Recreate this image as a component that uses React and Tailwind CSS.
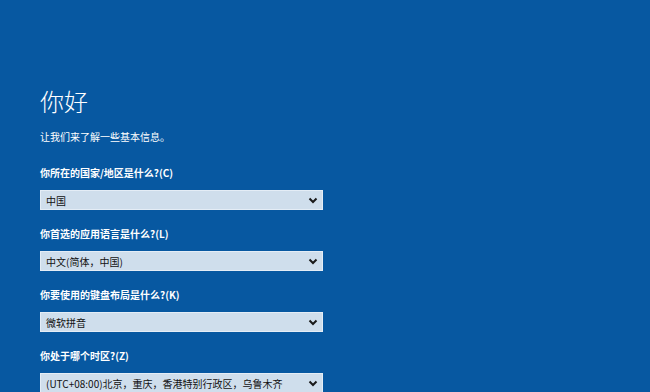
const fields = [
    { label: '你所在的国家/地区是什么?(C)', value: '中国' },
    { label: '你首选的应用语言是什么?(L)', value: '中文(简体，中国)' },
    { label: '你要使用的键盘布局是什么?(K)', value: '微软拼音' },
    { label: '你处于哪个时区?(Z)', value: '(UTC+08:00)北京，重庆，香港特别行政区，乌鲁木齐' },
];

const Chevron = () => (
    <svg width="10" height="7" viewBox="0 0 10 7" className="shrink-0">
        <path d="M1.5 1.5 L5 5 L8.5 1.5" fill="none" stroke="#1a1a1a" strokeWidth="2" />
    </svg>
);

export default function App() {
    return (
        <div
            className="w-[650px] h-[392px] overflow-hidden bg-[#0758a1] text-white pl-[40px] pt-[86px]"
            style={{ fontFamily: '"Microsoft YaHei", "Noto Sans CJK SC", "Liberation Sans", sans-serif' }}
        >
            <h1 className="text-[24px] leading-[30px] font-light">你好</h1>
            <p className="mt-[13px] text-[10px] leading-[16px]">让我们来了解一些基本信息。</p>

            <div className="mt-[20px] flex flex-col gap-[16px]">
                {fields.map((f) => (
                    <div key={f.label} className="flex flex-col gap-[9px]">
                        <div className="text-[10px] leading-[16px] font-bold">{f.label}</div>
                        <div className="w-[283px] h-[20px] bg-[#cfdeec] border border-[#e4edf6] flex items-center justify-between pl-[5px] pr-[4px] text-[#111] text-[10px]">
                            <span>{f.value}</span>
                            <Chevron />
                        </div>
                    </div>
                ))}
            </div>
        </div>
    );
}
